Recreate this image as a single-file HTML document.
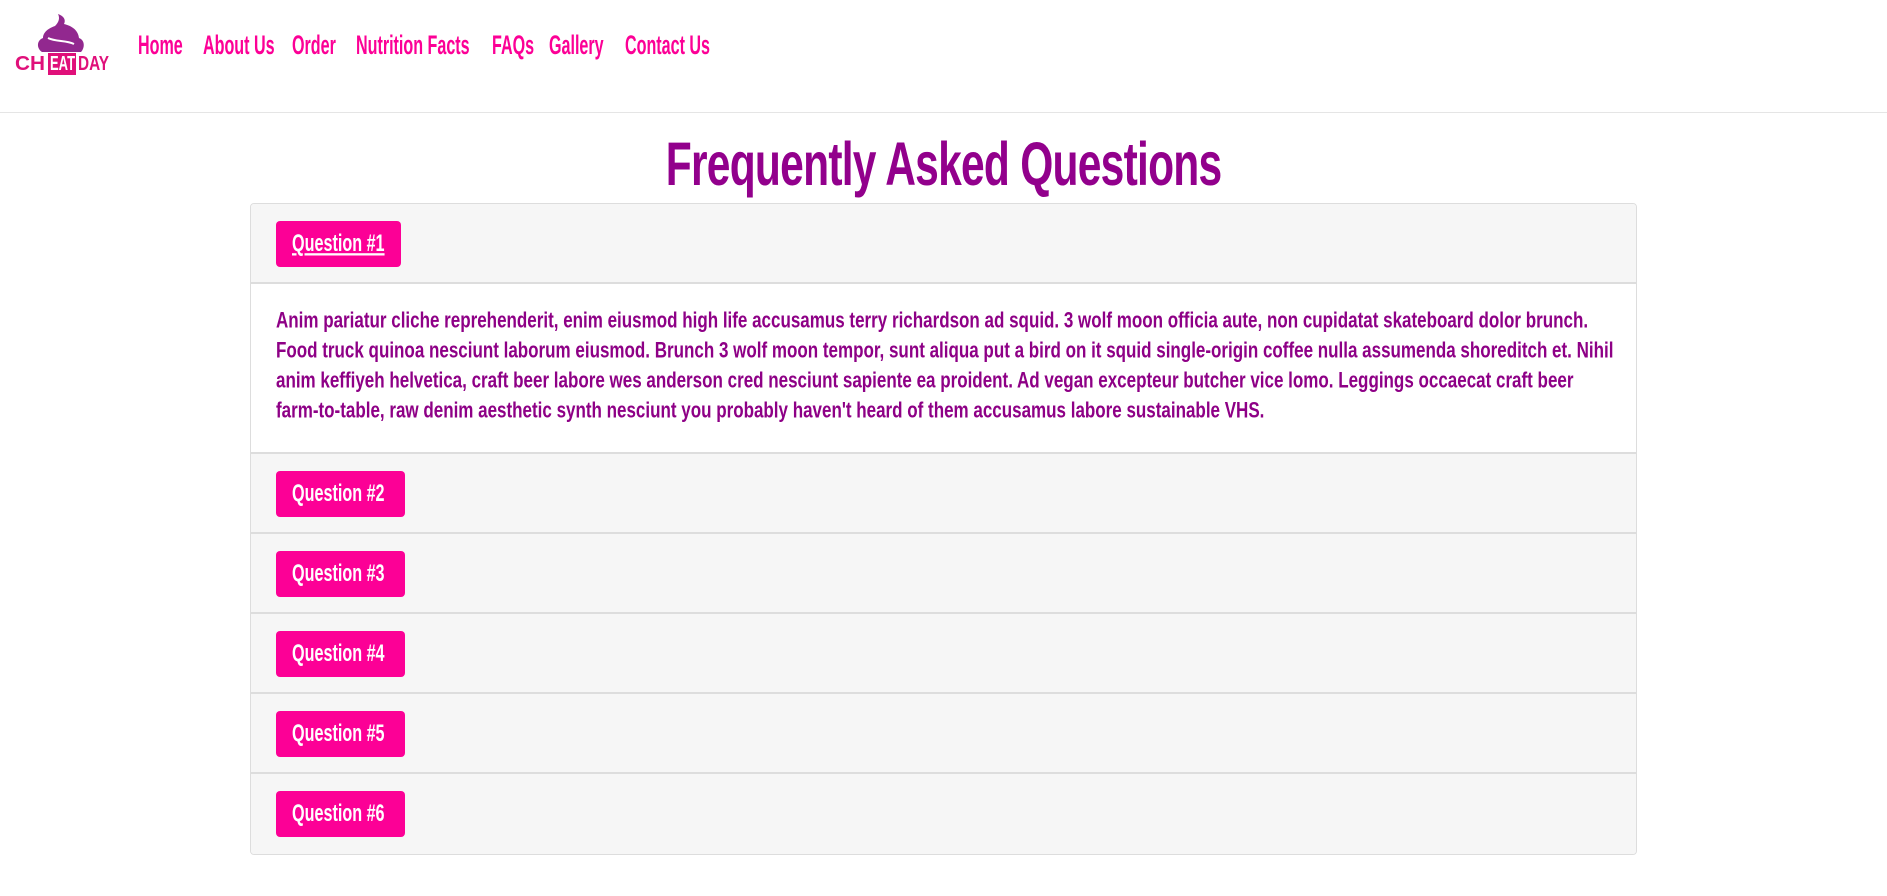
<!DOCTYPE html>
<html><head><meta charset="utf-8">
<style>
*{box-sizing:border-box;margin:0;padding:0}
body{width:1887px;height:896px;background:#fff;font-family:"Liberation Sans Narrow","Liberation Sans",sans-serif;font-weight:bold;position:relative;overflow:hidden}
.hdr{position:absolute;left:0;top:0;width:1887px;height:113px;border-bottom:1px solid #e5e5e5}
.nav a{position:absolute;top:30px;color:#fc0096;font-size:23px;text-decoration:none;transform:scale(0.7,1.15);transform-origin:left top;white-space:nowrap}
h1{position:absolute;left:0;width:1887px;top:131px;text-align:center;color:#92008c;font-size:56px;letter-spacing:-1px}
h1 span{display:inline-block;transform:scale(0.76,1.1)}
.card{position:absolute;left:250px;top:203px;width:1387px;border:1px solid #ddd;border-radius:4px;overflow:hidden}
.row{height:80px;background:#f6f6f6;border-bottom:2px solid #ddd;position:relative}
.row:last-child{border-bottom:none}
.btn{position:absolute;left:25px;top:17px;height:46px;width:129px;background:#fc0096;color:#fff;border-radius:4px;font-size:21px;padding-left:16px;line-height:46px;white-space:nowrap}
.btn span{display:inline-block;transform:scale(0.77,1.15);transform-origin:left center}
.body{height:170px;background:#fff;border-bottom:2px solid #ddd;padding:22px 25px 0 25px;color:#8e0086;font-size:20px;line-height:30px}
.body span{display:block;white-space:nowrap;transform:scale(0.85,1.1);transform-origin:left center}
</style></head><body>
<div class="hdr">
<svg style="position:absolute;left:14px;top:14px" width="96" height="62" viewBox="0 0 96 62">
<path d="M44 0c6 2 8 6 6 10 8 2 14 6 15 14 6 2 6 10 2 14H28c-6-4-5-12 1-14 0-6 6-10 12-12 4-4 5-8 3-12z" fill="#92288f"/>
<path d="M34 24c8 4 18 2 26 6" stroke="#fff" stroke-width="2" fill="none"/>
<rect x="34" y="39" width="28" height="22" fill="#e0107a"/>
<text x="1" y="56" textLength="30" lengthAdjust="spacingAndGlyphs" font-family="Liberation Sans,sans-serif" font-size="20" fill="#e0107a">CH</text>
<text x="36" y="56" textLength="25" lengthAdjust="spacingAndGlyphs" font-family="Liberation Sans,sans-serif" font-size="20" fill="#fff">EAT</text>
<text x="64" y="56" textLength="31" lengthAdjust="spacingAndGlyphs" font-family="Liberation Sans,sans-serif" font-size="20" fill="#e0107a">DAY</text>
</svg>
<div class="nav">
<a style="left:138px">Home</a><a style="left:203px">About Us</a><a style="left:292px">Order</a><a style="left:356px">Nutrition Facts</a><a style="left:492px">FAQs</a><a style="left:549px">Gallery</a><a style="left:625px">Contact Us</a>
</div></div>
<h1><span>Frequently Asked Questions</span></h1>
<div class="card">
<div class="row"><div class="btn" style="width:125px"><span style="text-decoration:underline">Question #1</span></div></div>
<div class="body">
<span>Anim pariatur cliche reprehenderit, enim eiusmod high life accusamus terry richardson ad squid. 3 wolf moon officia aute, non cupidatat skateboard dolor brunch.</span>
<span>Food truck quinoa nesciunt laborum eiusmod. Brunch 3 wolf moon tempor, sunt aliqua put a bird on it squid single-origin coffee nulla assumenda shoreditch et. Nihil</span>
<span>anim keffiyeh helvetica, craft beer labore wes anderson cred nesciunt sapiente ea proident. Ad vegan excepteur butcher vice lomo. Leggings occaecat craft beer</span>
<span>farm-to-table, raw denim aesthetic synth nesciunt you probably haven't heard of them accusamus labore sustainable VHS.</span>
</div>
<div class="row"><div class="btn"><span>Question #2</span></div></div>
<div class="row"><div class="btn"><span>Question #3</span></div></div>
<div class="row"><div class="btn"><span>Question #4</span></div></div>
<div class="row"><div class="btn"><span>Question #5</span></div></div>
<div class="row"><div class="btn"><span>Question #6</span></div></div>
</div>
</body></html>
